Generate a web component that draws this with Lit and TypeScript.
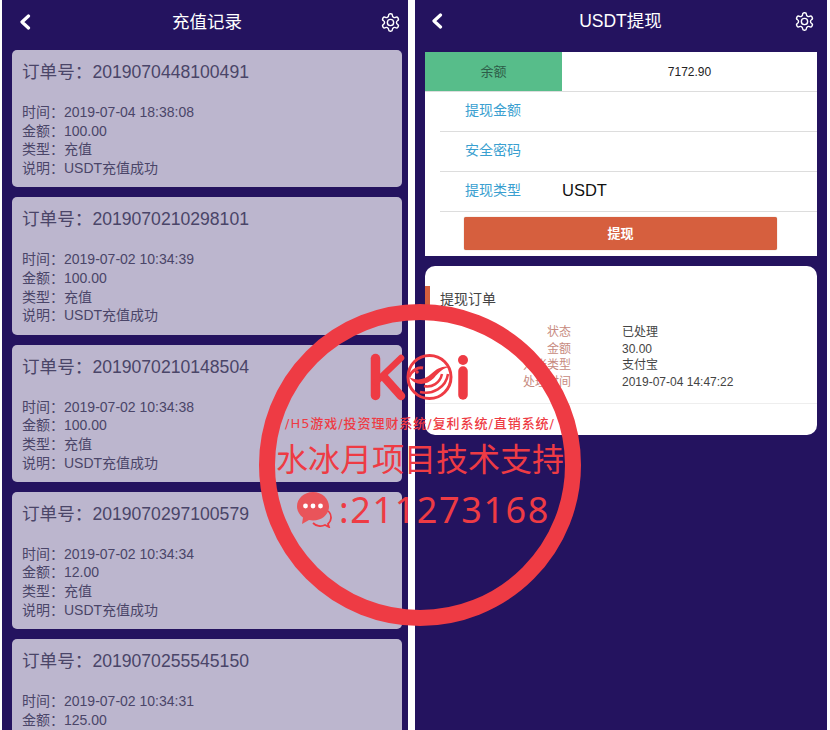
import { LitElement, html, css } from "lit";
import { customElement } from "lit/decorators.js";

const gear = html`<svg class="gear" viewBox="0 0 24 24" fill="none" stroke="#fff" stroke-width="1.6" stroke-linejoin="round">
  <path d="M12.22 2h-.44a2 2 0 0 0-2 2v.18a2 2 0 0 1-1 1.73l-.43.25a2 2 0 0 1-2 0l-.15-.08a2 2 0 0 0-2.73.73l-.22.38a2 2 0 0 0 .73 2.73l.15.1a2 2 0 0 1 1 1.72v.51a2 2 0 0 1-1 1.74l-.15.09a2 2 0 0 0-.73 2.73l.22.38a2 2 0 0 0 2.73.73l.15-.08a2 2 0 0 1 2 0l.43.25a2 2 0 0 1 1 1.73V20a2 2 0 0 0 2 2h.44a2 2 0 0 0 2-2v-.18a2 2 0 0 1 1-1.73l.43-.25a2 2 0 0 1 2 0l.15.08a2 2 0 0 0 2.73-.73l.22-.39a2 2 0 0 0-.73-2.73l-.15-.08a2 2 0 0 1-1-1.74v-.5a2 2 0 0 1 1-1.74l.15-.09a2 2 0 0 0 .73-2.73l-.22-.38a2 2 0 0 0-2.73-.73l-.15.08a2 2 0 0 1-2 0l-.43-.25a2 2 0 0 1-1-1.73V4a2 2 0 0 0-2-2z"/>
  <circle cx="12" cy="12" r="3.6"/>
</svg>`;

const back = html`<svg class="back" viewBox="0 0 12 16" fill="none" stroke="#fff" stroke-width="3.2" stroke-linecap="round" stroke-linejoin="round">
  <path d="M9.5 2 3 8l6.5 6"/>
</svg>`;

const logo = html`<svg class="logo" viewBox="0 0 105 48" fill="none" stroke="#ee3b44">
  <path d="M6.5 5.500V42.500" stroke-width="9.500" stroke-linecap="round"/>
  <path d="M32 5 7 29" stroke-width="6.500" stroke-linecap="round"/>
  <path d="M15 24 32 43" stroke-width="8.500" stroke-linecap="round"/>
  <circle cx="60.500" cy="24" r="21.500" stroke-width="3"/>
  <path d="M40 24C47 28 56 27 62 21 68 15 75 12 81 14 74 15 70 19 65 25 57 33 46 33 40 24Z" fill="#ee3b44" stroke="none"/>
  <path d="M40 24C43 17 49 14 54 15" stroke-width="3"/>
  <circle cx="48" cy="19" r="1.800" fill="#ee3b44" stroke="none"/>
  <path d="M55 33C63 35 71 30 73 21" stroke-width="2.500"/>
  <path d="M51 39C63 42 77 35 79 21" stroke-width="2.500"/>
  <circle cx="94" cy="7" r="5" fill="#ee3b44" stroke="none"/>
  <path d="M94 18V42" stroke-width="9.500" stroke-linecap="round"/>
</svg>`;

const chat = html`<svg class="chat" viewBox="0 0 36 36">
  <path d="M27 17a10 9 0 0 1 7 9c0 3-2 5-3 6l1 3-4-2c-4 2-9 1-12-2" fill="none" stroke="#ee3b44" stroke-width="1.800"/>
  <path d="M16 0C7 0 0 6.500 0 14.500 0 19 2.500 23 6 25.500L5 32l7-4c1.300.3 2.700.5 4 .5 9 0 16-6.200 16-14S25 0 16 0Z" fill="#e9545a"/>
  <circle cx="8.500" cy="14" r="2.400" fill="#fff"/>
  <circle cx="16" cy="14" r="2.400" fill="#fff"/>
  <circle cx="23.500" cy="14" r="2.400" fill="#fff"/>
</svg>`;

const records = [
  ["2019070448100491", "2019-07-04 18:38:08", "100.00"],
  ["2019070210298101", "2019-07-02 10:34:39", "100.00"],
  ["2019070210148504", "2019-07-02 10:34:38", "100.00"],
  ["2019070297100579", "2019-07-02 10:34:34", "12.00"],
  ["2019070255545150", "2019-07-02 10:34:31", "125.00"],
];

const orderRows = [
  ["状态", "已处理"],
  ["金额", "30.00"],
  ["对账类型", "支付宝"],
  ["处理时间", "2019-07-04 14:47:22"],
];

@customElement("app-root")
export class AppRoot extends LitElement {
  static styles = css`
    :host {
      display: block;
      width: 830px;
      height: 730px;
      position: relative;
      overflow: hidden;
      background: #fff;
      font-family: "Liberation Sans", "Noto Sans CJK SC", sans-serif;
    }
    .page {
      display: flex;
      gap: 7px;
      height: 730px;
      padding-left: 2px;
    }
    .panel {
      background: #24135f;
      height: 730px;
      overflow: hidden;
      flex: none;
    }
    .left { width: 406px; }
    .right { width: 412px; }
    .head {
      display: flex;
      align-items: center;
      justify-content: space-between;
      color: #fff;
      font-size: 17.500px;
    }
    .left .head { padding: 4px 7px 0 17px; height: 40px; box-sizing: border-box; margin-bottom: 10px; }
    .right .head { padding: 2px 12px 0 16px; height: 40px; box-sizing: border-box; margin-bottom: 12px; }
    .head .title { flex: 1; text-align: center; padding-bottom: 4px; }
    .left .title { padding-left: 3px; }
    .right .title { padding-left: 4px; padding-bottom: 3px; }
    .back { width: 12px; height: 16px; flex: none; }
    .gear { width: 21px; height: 21px; flex: none; }

    .list {
      display: flex;
      flex-direction: column;
      gap: 10px;
      padding: 0 6px 0 10px;
    }
    .card {
      background: #bcb6ce;
      border-radius: 5px;
      height: 137.250px;
      flex: none;
      box-sizing: border-box;
      padding: 10px 10px 0;
      color: #4a4568;
    }
    .no { font-size: 17.600px; line-height: 24px; margin-bottom: 19px; }
    .line { font-size: 14px; line-height: 18.670px; }

    .form {
      margin: 0 10px;
      background: #fff;
      height: 204px;
      display: flex;
      flex-direction: column;
    }
    .bal {
      display: flex;
      height: 40px;
      flex: none;
      border-bottom: 1px solid #ddd;
      box-sizing: border-box;
      font-size: 12px;
      color: #222;
      align-items: stretch;
    }
    .bal .k {
      width: 137px;
      background: #57bd8a;
      color: #2d5c48;
      display: flex;
      align-items: center;
      justify-content: center;
      font-size: 13px;
      padding-bottom: 3px;
      box-sizing: border-box;
    }
    .bal .v { flex: 1; display: flex; align-items: center; justify-content: center; }
    .row {
      height: 40px;
      flex: none;
      box-sizing: border-box;
      margin-left: 15px;
      padding-left: 25px;
      border-bottom: 1px solid #ddd;
      display: flex;
      align-items: center;
      font-size: 14px;
      color: #3a9fd0;
    }
    .row .lbl { width: 97px; padding-bottom: 5px; }
    .row .usdt { color: #111; font-size: 16.500px; padding-bottom: 2px; }
    .btn-wrap { padding: 5px 39px 0; }
    .btn {
      height: 33px;
      width: 313px;
      background: #d65f3e;
      border-radius: 2px;
      color: #fff;
      font-size: 13px;
      font-weight: bold;
      display: flex;
      align-items: center;
      justify-content: center;
      box-sizing: border-box;
      padding-bottom: 3px;
      box-shadow: 0 0 1px #a86;
    }

    .orders {
      margin: 10px 10px 0;
      background: #fff;
      border-radius: 10px;
      height: 169px;
      box-sizing: border-box;
      padding-top: 20px;
      display: flex;
      flex-direction: column;
    }
    .otitle {
      height: 28px;
      border-left: 5px solid #d65f3e;
      padding-left: 10px;
      font-size: 14px;
      line-height: 26px;
      color: #444;
      box-sizing: border-box;
    }
    .otable {
      margin-top: 10px;
      height: 80px;
      border-bottom: 1px solid #eee;
      font-size: 12px;
      box-sizing: border-box;
      flex: none;
    }
    .orow { display: flex; line-height: 16px; height: 16.500px; }
    .orow .ok { width: 146px; text-align: right; color: #c78a80; flex: none; }
    .orow .ov { margin-left: 51px; color: #444; }

    .mark {
      position: absolute;
      left: 259px;
      top: 304px;
      width: 322px;
      height: 322px;
      box-sizing: border-box;
      border: 16px solid #ee3b44;
      border-radius: 50%;
      display: flex;
      flex-direction: column;
      align-items: center;
      color: #ee3b44;
      white-space: nowrap;
      padding-top: 33px;
    }
    .logo { width: 105px; height: 48px; flex: none; margin-left: 3px; }
    .slogan {
      margin-top: 14px;
      font-size: 13px;
      line-height: 18px;
      letter-spacing: 0.950px;
      font-family: "DejaVu Sans", "Noto Sans CJK SC", sans-serif;
      font-weight: 500;
    }
    .big {
      margin-top: 2px;
      font-size: 32px;
      line-height: 44px;
      font-family: "Noto Sans CJK SC", sans-serif;
      font-weight: 400;
    }
    .qq {
      margin-top: 9px;
      margin-left: 7px;
      display: flex;
      align-items: center;
      gap: 6px;
      font-size: 36px;
      line-height: 44px;
      letter-spacing: 1.600px;
      font-family: "Noto Sans", sans-serif;
    }
    .chat { width: 36px; height: 36px; flex: none; }
  `;

  render() {
    return html`
      <div class="page">
        <section class="panel left">
          <div class="head">${back}<span class="title">充值记录</span>${gear}</div>
          <div class="list">
            ${records.map(
              ([no, time, amt]) => html`
                <div class="card">
                  <div class="no">订单号：${no}</div>
                  <div class="line">时间：${time}</div>
                  <div class="line">金额：${amt}</div>
                  <div class="line">类型：充值</div>
                  <div class="line">说明：USDT充值成功</div>
                </div>
              `
            )}
          </div>
        </section>
        <section class="panel right">
          <div class="head">${back}<span class="title">USDT提现</span>${gear}</div>
          <div class="form">
            <div class="bal"><div class="k">余额</div><div class="v">7172.90</div></div>
            <div class="row"><span class="lbl">提现金额</span></div>
            <div class="row"><span class="lbl">安全密码</span></div>
            <div class="row"><span class="lbl">提现类型</span><span class="usdt">USDT</span></div>
            <div class="btn-wrap"><div class="btn">提现</div></div>
          </div>
          <div class="orders">
            <div class="otitle">提现订单</div>
            <div class="otable">
              ${orderRows.map(
                ([k, v]) => html`<div class="orow"><span class="ok">${k}</span><span class="ov">${v}</span></div>`
              )}
            </div>
          </div>
        </section>
      </div>
      <div class="mark">
        ${logo}
        <div class="slogan">/H5游戏/投资理财系统/复利系统/直销系统/</div>
        <div class="big">水冰月项目技术支持</div>
        <div class="qq">${chat}<span>:211273168</span></div>
      </div>
    `;
  }
}
